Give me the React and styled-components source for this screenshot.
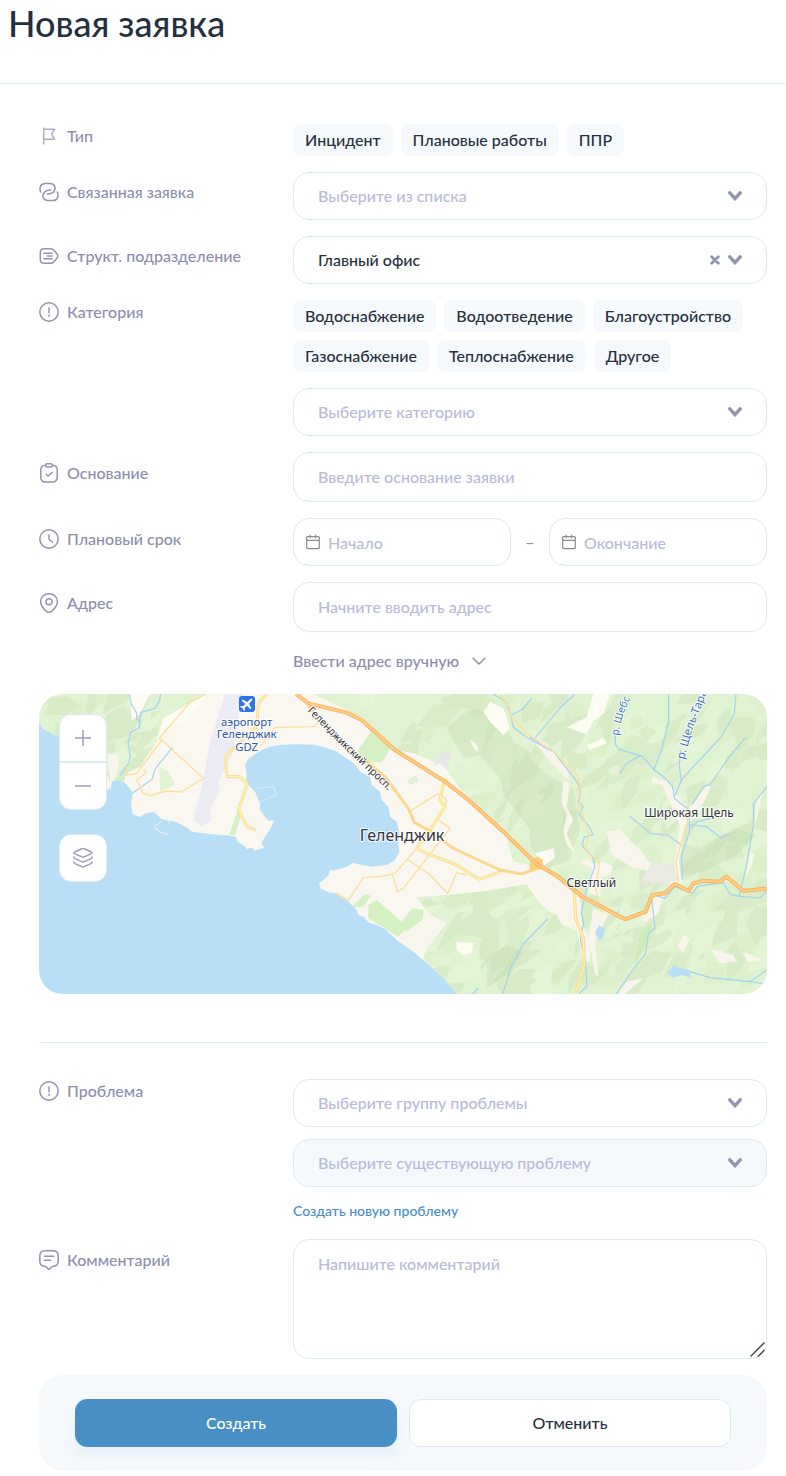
import React, { useState } from 'react'
import styled, { createGlobalStyle } from 'styled-components'

const colors = {
  text: '#252f3d',
  label: '#8e8dad',
  placeholder: '#b9b9d9',
  border: '#dcebef',
  pale: '#f5f9fc',
  primary: '#478fc5'
}

const requestTypes = ['Инцидент', 'Плановые работы', 'ППР']
const categories = [
  'Водоснабжение',
  'Водоотведение',
  'Благоустройство',
  'Газоснабжение',
  'Теплоснабжение',
  'Другое'
]

// 20x20 outline icons for the label column
const icons = {
  flag: (
    <g opacity='0.75'>
      <path d='M4.7 2v16' />
      <path d='M4.7 3.3h11l-2.6 4.2c-.3.6-.3 1.2 0 1.7l2.6 4.1h-11' />
    </g>
  ),
  link: (
    <>
      <path d='M1.7 10C.2 7 1 1.4 6 1.4h5c4.4 0 6 4 4.4 7.2C14.3 10.8 12 12 8.3 12' />
      <path
        d='M1.7 10C.2 7 1 1.4 6 1.4h5c4.4 0 6 4 4.4 7.2C14.3 10.8 12 12 8.3 12'
        transform='rotate(180 10 10)'
      />
    </>
  ),
  department: (
    <>
      <path d='M5.2 2.7h6.3c1.5 0 2.6.5 3.5 1.6l2.9 3.5c1 1.3 1 3.1 0 4.4L15 15.7c-.9 1.1-2 1.6-3.5 1.6H5.2C2.7 17.3 1.3 16 1.3 13.5v-7C1.3 4 2.7 2.7 5.2 2.7z' />
      <path d='M5 7.3h8M8.3 10H13M5 12.8h8' />
    </>
  ),
  alert: (
    <>
      <circle cx='10' cy='10' r='9.2' />
      <path d='M10 6v4.8M10 13.2v1' />
    </>
  ),
  clipboard: (
    <>
      <path d='M6.6 2.3C3.4 2.4 1.8 3.4 1.8 7v7c0 3.6 1.4 5 4.8 5h6.8c3.4 0 4.8-1.4 4.8-5V7c0-3.6-1.6-4.6-4.8-4.7' />
      <rect x='6.6' y='0.7' width='6.8' height='3.3' rx='1.6' />
      <path d='M7.3 11.3L9 13l4-3.4' />
    </>
  ),
  clock: (
    <>
      <circle cx='10' cy='10' r='9.2' />
      <path d='M10 6v3.2c0 1 .4 1.6 1.2 2.2l2.3 1.6' />
    </>
  ),
  pin: (
    <>
      <path d='M10 .8C5 .8 1.6 4 1.6 8.6c0 4.2 3 7.7 6.2 10 1.4 1 3 1 4.4 0 3.2-2.3 6.2-5.8 6.2-10C18.4 4 15 .8 10 .8z' />
      <circle cx='10' cy='8.7' r='3' />
    </>
  ),
  comment: (
    <>
      <path d='M6 .8h8c3.5 0 5.2 1.7 5.2 5.2v5c0 3.6-1.5 5-4.4 5.2-1.2.1-2 .3-2.8 1.2l-1.2 1.5c-.5.6-1.1.6-1.6 0L8 17.4c-.8-.9-1.6-1.1-2.8-1.2C2.3 16 .8 14.6.8 11V6C.8 2.5 2.5.8 6 .8z' />
      <path d='M5.3 6.3h9.4M5.3 10.3h6.2' />
    </>
  )
}

const Icon = ({ name }) => (
  <LabelIcon viewBox='0 0 20 20' aria-hidden='true'>
    {icons[name]}
  </LabelIcon>
)

const Chevron = () => (
  <svg width='14' height='10' viewBox='0 0 14 10' fill='none' aria-hidden='true'>
    <path
      d='M1.8 1.8L7 7.6l5.2-5.8'
      stroke='#9394b1'
      strokeWidth='3.4'
      strokeLinecap='round'
    />
  </svg>
)

const Calendar = () => (
  <svg
    width='14'
    height='16'
    viewBox='0 0 14 16'
    fill='none'
    stroke='#8c8c8c'
    strokeWidth='1.2'
    aria-hidden='true'
  >
    <rect x='0.7' y='2.6' width='12.6' height='12' rx='1' />
    <path d='M.7 6.4h12.6M4.2.8v3.4M9.6.8v3.4' />
  </svg>
)

const SelectField = ({ id, label, options, value, clearable, disabled }) => {
  const [selected, setSelected] = useState(value || '')
  return (
    <Control>
      <Select
        id={id}
        aria-label={label}
        value={selected}
        $empty={!selected}
        disabled={disabled}
        onChange={e => setSelected(e.target.value)}
      >
        {options.map((option, index) => (
          <option key={option} value={index === 0 && !value ? '' : option}>
            {option}
          </option>
        ))}
      </Select>
      <Indicators>
        {clearable && (
          <ClearButton
            type='button'
            aria-label='Очистить'
            onClick={() => setSelected('')}
          >
            <svg width='10' height='10' viewBox='0 0 10 10'>
              <path
                d='M1.7 1.7l6.6 6.6M8.3 1.7L1.7 8.3'
                stroke='#9394b1'
                strokeWidth='2.8'
                strokeLinecap='round'
              />
            </svg>
          </ClearButton>
        )}
        <Chevron />
      </Indicators>
    </Control>
  )
}

const Chips = ({ items, labelledBy }) => (
  <ChipList role='group' aria-labelledby={labelledBy}>
    {items.map(item => (
      <Chip type='button' key={item}>
        {item}
      </Chip>
    ))}
  </ChipList>
)

// Shaded facets of the mountain relief, seeded so that they never move
const makeFacets = count => {
  let seed = 17
  const rand = () => {
    seed = (seed * 16807) % 2147483647
    return seed / 2147483647
  }
  const fills = ['#c3dcae', '#cde3ba', '#eff9e2', '#d5edc2', '#e9f7dc', '#c9dbb9']
  return Array.from({ length: count }, (_, index) => {
    const x = 27 + rand() * 2184
    const y = 27 + rand() * 900
    const length = 25 + rand() * 60
    const width = 12 + rand() * 28
    const angle = -0.4 - rand() * 0.9
    const cos = Math.cos(angle)
    const sin = Math.sin(angle)
    const corners = [
      [-length, width * (rand() - 0.5)],
      [-length * 0.2 * rand(), -width],
      [length * 0.6, -width * rand()],
      [length, width * (rand() - 0.3)],
      [length * 0.1, width]
    ]
    return {
      key: index,
      fill: fills[Math.floor(rand() * fills.length)],
      points: corners
        .map(([a, b]) => `${Math.round(x + a * cos - b * sin)},${Math.round(y + a * sin + b * cos)}`)
        .join(' ')
    }
  })
}

const facets = makeFacets(560)

const MapDrawing = () => (
  <MapSvg
    viewBox='27 27 2184 900'
    preserveAspectRatio='xMidYMid slice'
    role='img'
    aria-label='Карта'
  >
    <defs>
      <clipPath id='hills'>
        <path d='M27 27H530L480 60 388 158 330 245 290 265 282 290 262 285 240 290 215 230 88 158 40 130 27 112z' />
        <path d='M850 27H2211V927H1282L1235 875 1180 820 1190 790 1250 715 1200 690 1160 637 1250 630 1370 618 1490 597 1525 650 1560 680 1630 710 1650 650 1570 570 1530 545 1450 530 1425 440 1290 310 1240 240 1150 205 1065 190 1070 165 1000 100 950 75z' />
      </clipPath>
      <path id='avenue' d='M832 78L930 178 1090 332' />
      <path id='shebs' d='M1766 152Q1770 90 1815 15' />
      <path id='tara' d='M1962 224L1985 140 2035 10' />
    </defs>

    <rect x='27' y='27' width='2184' height='900' fill='#faf7f0' />

    <g clipPath='url(#hills)'>
      <rect x='27' y='27' width='2184' height='900' fill='#dff2d2' />
      <g opacity='0.32'>
        {facets.map(facet => (
          <polygon key={facet.key} points={facet.points} fill={facet.fill} />
        ))}
      </g>
      <g fill='#b4cda1' opacity='0.25'>
        <path d='M1250 130l70-60 90 20 40 80 50 30-20 90-70-10-60-70-50 10z' />
        <path d='M1500 330l70-40 60 20 20 130-40 90-60 20-50-70z' />
        <path d='M1400 220l80-20 60 60 80 50 20 100-20 120-50-10-80-100-70-90z' />
        <path d='M1940 470l70 20 100-60 70 20-60 60-100 50-70 10z' />
        <path d='M1370 820l60-40 50 20-40 60-70 50z' />
      </g>
    </g>

    {/* bare slopes and valleys */}
    <g fill='#fdfcf3'>
      <path d='M300 27h60l-30 60-25 20z' />
      <path d='M400 100l70-40 60-33-60 80-60 20-30 40z' />
      <path d='M1360 80l20-30 40 20 20 60-20 20-40-40z' />
      <path d='M1690 27h50l-20 60-30 20-20 40-60-20 60-30z' />
      <path d='M1670 180l50-20 10 15-50 20z' />
      <path d='M1280 770l50 5-5 30-25 5-20-15z' />
      <path d='M1318 162l20 15 8 25-12-10z' />
      <path d='M1515 505l55-15 4 30-30 20z' />
    </g>
    <g fill='#f8f5ec'>
      <path d='M232 205l35 5-5 60-20 30z' />
      <path d='M1730 440l40-5 60 60 30 40 40 0 45 25-5 35-105-5 15-35-40-5-65-40z' />
      <path d='M1500 590l80-25 70 75 5 70 25 60 0 60-20-5-20-90-45-15-30-60z' />
      <path d='M1650 530l25-10 10 15 40-5 25 15-10 25-25 5-5 60-35-10 10-75z' />
      <path d='M1690 670l45 20-40 75 10 110-10-10-20-110z' />
      <path d='M1600 285l20 10-10 70 20 40-20 40 25 60-25-25-10-40 10-50-15-40z' />
      <path d='M1500 150l50 25 60 75 10 40-40-40-60-70z' />
      <path d='M1867 275l45 15 50 65 10 20 60-75 10 5-40 90-50 35-25-60-30-70-30-5z' />
      <path d='M1952 400l20 0-25 130 10 60-20 10-5-50z' />
      <path d='M1867 640l35-10-20 60-40 20-10-20z' />
      <path d='M2040 790l70 20 10 20-50 5z' />
      <path d='M2140 800l60 25-50 5z' />
      <path d='M1960 750l20 10-20 45-18-20z' />
      <path d='M2180 340l20-25-20 90-8 20z' />
      <path d='M2160 500l15 10-10 30-18 40z' />
      <path d='M1790 890l50-10-55 47-20 0z' />
      <path d='M1110 760l80-80 50 35-60 85z' />
    </g>
    <path d='M1840 570l30-40 60 10 15 45-50 10-60 5z' fill='#e6e6e0' opacity='0.8' />
    <path d='M1210 240l30-45 25 10-15 50-20-20z' fill='#e6e6e4' />

    {/* parks */}
    <g fill='#d5f0c3'>
      <path d='M985 195l40-58 60 50-30 45-60 0z' />
      <path d='M388 245l28 15 20 40-45 20z' fill='#e0f3d2' />
      <path d='M965 665l40-38 18 5-25 35z' />
      <path d='M1015 660l25-15 80 70 5 20-20 20-90-55z' />
      <path d='M1112 715l35-45 35 5-5 30-50 35z' />
      <path d='M598 448l25-70 12 5-20 68z' />
      <path d='M1812 840l20-100 35-25-20 70z' fill='#cdeab8' />
      <path d='M1130 285l30-15 5 20-25 10z' fill='#dff2d2' />
    </g>

    {/* runway */}
    <path
      d='M584 27h58l-16 30-3 80-18 75-40 80 3 28-27 50 3 35-28 20-26-22 25-95 25-135z'
      fill='#ecebf4'
    />

    {/* sea */}
    <path
      d='M27 112L40 132 60 142 88 158 150 220 232 314 242 308 246 290 262 285 283 292 303 314 308 325 303 360 308 388 328 396 350 385 372 380 395 402 440 412 475 430 485 440 540 447 600 452 618 455 622 470 640 480 650 492 665 488 675 497 703 488 694 475 708 450 722 430 733 406 715 408 705 395 690 375 690 355 675 320 660 305 648 285 650 265 645 240 655 222 675 208 695 195 720 185 750 180 800 178 850 179 880 186 915 197 950 220 975 238 990 260 1020 275 1025 300 1050 320 1055 345 1075 365 1080 395 1100 410 1108 440 1105 480 1108 500 1095 525 1070 540 1025 545 985 538 970 533 950 545 915 556 900 555 895 572 868 595 870 610 895 622 915 625 955 650 980 675 985 690 1000 695 1015 712 1040 720 1065 732 1100 765 1150 800 1200 842 1240 880 1281 927H27z'
      fill='#b8dff5'
    />
    <g fill='none' stroke='#f5f3ec' strokeWidth='3'>
      <path d='M373 428l20 14 23 7M376 424l20-16M418 404v15' />
      <path d='M680 310l50-6 8 26-48 22' strokeWidth='2' />
    </g>

    {/* rivers */}
    <g fill='none' stroke='#a2d2ef' strokeWidth='3.5' strokeLinejoin='round'>
      <path d='M298 27l6 30 15 25 2 22 9 3-3 22-25 14-8 30 7 40-5 22-12 15-13 22' />
      <path d='M392 27l-3 20-15 23-42 12-4 45' />
      <path d='M428 187l-53 65-8 30-60 43' />
      <path d='M1390 27l40 25 12 40 8 35 40 30 40 22M1505 40l-30 35-32 15M1635 27l-45 42-75 90' />
      <path d='M1500 155l40 30 30 15 60 75 20 30 0 30-7 15 16 14-12 25 30 35 12 24-27 10-5 25 30 30 8 30-22 60-20 80 8 30-10 50 15 65 5 75-30 30' />
      <path d='M1756 150l0 28 12 15 70 22 35 40 33 25 22 25 5 35 25 20 20 15 0 65-23 70 2 75M1768 267l20-30 45-27' />
      <path d='M1916 27l0 80-20 85-26 65M2118 27l-5 60-40 70-80 85-40 45-18 45M1951 195l-3 50 7 45M2147 157l-50 60-58 83-17 3-35 55' />
      <path d='M1798 393l65 53 50 4 42 31M1980 420l50 5 42 33 26-10M1982 430l20-20 40-10' />
      <path d='M2211 305l-40 50 0 60-22 130-22 90' />
      <path d='M1860 625l45 15 30-35 50 20 20-22 75-10 20 35 30 6 60 5 20-20' />
      <path d='M1865 640l10 90-20 15-8 60-50 65-38 57' />
      <path d='M1980 860l60 18 120 12 50-35M2150 888l50 8' />
      <path d='M1418 927l27-85 35-65 73-75M1328 927l17-18' />
    </g>
    <path d='M1910 860l15-8 5-14 15 10 35 8 2 22-25-8-30 8-12-12z' fill='#b8dff5' />
    <path d='M1695 745l12-25 17 12-5 25-10 12z' fill='#b8dff5' />

    {/* streets */}
    <g fill='none' stroke='#fcdf9b' strokeWidth='4' strokeLinejoin='round'>
      <path d='M528 27l-48 25-92 108 7 5-75 100-28 5-2-26M395 165l125 115-67 41-43-3-50 14-20-7-20-40 30-23-10-10' />
      <path d='M690 185l45-57 115-3 20-15' />
      <path d='M915 622l40 25 45-70 50-2 45-10 65-75' />
      <path d='M1088 568l14 52 18-10 105-135 35-45-35-25M1130 522l65 43 58 60 27-62 30 7' />
      <path d='M1138 380l87-55 25 20-5 20' />
      <path d='M1410 27l28 40 5 30 50 50 75 50 75 75 10 45-5 45 30 90-15 40 45 40-10 80 15 70' />
      <path d='M1960 370l15 30-15 50-22 80 7 60' />
    </g>
    <g fill='none' stroke='#f9d98a' strokeWidth='9' strokeLinejoin='round'>
      <path d='M710 27l-25 28-5 70-95 90 7 60h38l22 23-27 77 27 50 26 10' />
      <path d='M1160 490l30 15 90 35 67 43 68-23M1160 490l40-55 45-70-15-20 10-45 10-20' />
      <path d='M1633 620l4 80 23 60 3 80-28 87' />
    </g>
    <g fill='none' stroke='#fff3b5' strokeWidth='4' strokeLinejoin='round'>
      <path d='M710 27l-25 28-5 70-95 90 7 60h38l22 23-27 77 27 50 26 10' />
      <path d='M1160 490l30 15 90 35 67 43 68-23M1160 490l40-55 45-70-15-20 10-45 10-20' />
      <path d='M1633 620l4 80 23 60 3 80-28 87' />
    </g>
    <path
      d='M835 62l90 105 85 63 55 45 70 95 18 42 47 26 70 52 140 65 65 12 55-20'
      fill='none'
      stroke='#fdd68f'
      strokeWidth='9'
      strokeLinejoin='round'
    />
    <path d='M1500 530l20-15 18 8v30l-40 2z' fill='#fdcf7e' />
    {[
      ['#f9b45f', 12],
      ['#ffcd85', 6]
    ].map(([stroke, width]) => (
      <path
        key={stroke}
        d='M798 27l37 28 115 28 45 22 100 90 150 95 65 50 110 100 100 97 60 35 80 65 125 66 62-23 20-50 38-5 30-28 40 21 15-23 30-8 50 3 20-15 50 43 75-8'
        fill='none'
        stroke={stroke}
        strokeWidth={width}
        strokeLinejoin='round'
      />
    ))}

    {/* names */}
    <MapText $size={34} $fill='#2a56a6' textAnchor='middle'>
      <tspan x='650' y='122'>аэропорт</tspan>
      <tspan x='650' y='160'>Геленджик</tspan>
      <tspan x='650' y='199'>GDZ</tspan>
    </MapText>
    <rect x='627' y='33' width='48' height='48' rx='9' fill='#2f74e6' />
    <path
      d='M664 41c3 0 4 2 2 5l-9 10 7 14-3 3-10-11-7 7 1 7-3 2-4-8-8-4 2-3 7 1 7-7-11-10 3-3 14 7 9-9z'
      fill='#fff'
    />
    <MapText $size={48} x='1116' y='468' textAnchor='middle'>Геленджик</MapText>
    <MapText $size={36} x='1977' y='396' textAnchor='middle'>Широкая Щель</MapText>
    <MapText $size={36} x='1684' y='607' textAnchor='middle'>Светлый</MapText>
    <MapText $size={31}>
      <textPath href='#avenue'>Геленджикский просп.</textPath>
    </MapText>
    <MapText $size={31} $fill='#3f78bd'>
      <textPath href='#shebs'>р. Шебс</textPath>
    </MapText>
    <MapText $size={34} $fill='#3f78bd'>
      <textPath href='#tara'>р. Щель-Тара</textPath>
    </MapText>
  </MapSvg>
)

const App = () => {
  return (
    <>
      <GlobalStyle />
      <Header>
        <Title>Новая заявка</Title>
      </Header>
      <Form onSubmit={e => e.preventDefault()}>
        <Row>
          <Label as='span' id='type-label'>
            <Icon name='flag' />
            Тип
          </Label>
          <Chips items={requestTypes} labelledBy='type-label' />
        </Row>
        <Row>
          <Label htmlFor='related' $offset={8}>
            <Icon name='link' />
            Связанная заявка
          </Label>
          <SelectField id='related' options={['Выберите из списка']} />
        </Row>
        <Row>
          <Label htmlFor='department' $offset={8}>
            <Icon name='department' />
            Структ. подразделение
          </Label>
          <SelectField
            id='department'
            options={['Главный офис']}
            value='Главный офис'
            clearable
          />
        </Row>
        <Row>
          <Label htmlFor='category' id='category-label'>
            <Icon name='alert' />
            Категория
          </Label>
          <Stack $gap={16}>
            <Chips items={categories} labelledBy='category-label' />
            <SelectField id='category' options={['Выберите категорию']} />
          </Stack>
        </Row>
        <Row>
          <Label htmlFor='reason' $offset={9}>
            <Icon name='clipboard' />
            Основание
          </Label>
          <Input id='reason' placeholder='Введите основание заявки' />
        </Row>
        <Row>
          <Label htmlFor='start' $offset={9}>
            <Icon name='clock' />
            Плановый срок
          </Label>
          <Period>
            <DateField>
              <Calendar />
              <DateInput id='start' placeholder='Начало' />
            </DateField>
            <Dash>–</Dash>
            <DateField>
              <Calendar />
              <DateInput aria-label='Окончание' placeholder='Окончание' />
            </DateField>
          </Period>
        </Row>
        <Row>
          <Label htmlFor='address' $offset={9}>
            <Icon name='pin' />
            Адрес
          </Label>
          <Stack $gap={12}>
            <Input id='address' placeholder='Начните вводить адрес' />
            <ManualButton type='button'>
              Ввести адрес вручную
              <svg width='14' height='8' viewBox='0 0 14 8' fill='none'>
                <path d='M.7.7L7 7 13.3.7' stroke='#8e8dad' strokeWidth='1.4' />
              </svg>
            </ManualButton>
          </Stack>
        </Row>

        <MapFrame>
          <MapDrawing />
          <MapControls>
            <ZoomGroup>
              <MapButton type='button' aria-label='Приблизить'>
                <svg width='16' height='16' viewBox='0 0 16 16'>
                  <path d='M8 0v16M0 8h16' />
                </svg>
              </MapButton>
              <MapButton type='button' aria-label='Отдалить'>
                <svg width='16' height='16' viewBox='0 0 16 16'>
                  <path d='M0 8h16' />
                </svg>
              </MapButton>
            </ZoomGroup>
            <MapButton type='button' aria-label='Слои' $single>
              <svg width='20' height='20' viewBox='0 0 20 20'>
                <path d='M8.8.8L2 3.8c-1.4.7-1.4 1.4 0 2.1l6.8 3c.8.4 1.6.4 2.4 0l6.8-3c1.4-.7 1.4-1.4 0-2.1l-6.8-3c-.8-.4-1.6-.4-2.4 0z' />
                <path d='M.8 9c0 .8.4 1.2 1.2 1.6l6.8 3c.8.4 1.6.4 2.4 0l6.8-3c.8-.4 1.2-.8 1.2-1.6' />
                <path d='M.8 14c0 .8.4 1.2 1.2 1.6l6.8 3c.8.4 1.6.4 2.4 0l6.8-3c.8-.4 1.2-.8 1.2-1.6' />
              </svg>
            </MapButton>
          </MapControls>
        </MapFrame>

        <Divider />

        <Row>
          <Label htmlFor='problem-group'>
            <Icon name='alert' />
            Проблема
          </Label>
          <Stack $gap={12}>
            <SelectField id='problem-group' options={['Выберите группу проблемы']} />
            <SelectField
              id='problem'
              label='Существующая проблема'
              options={['Выберите существующую проблему']}
              disabled
            />
            <NewProblem href='#problem'>Создать новую проблему</NewProblem>
          </Stack>
        </Row>
        <Row>
          <Label htmlFor='comment' $offset={9}>
            <Icon name='comment' />
            Комментарий
          </Label>
          <Control>
            <Textarea id='comment' placeholder='Напишите комментарий' />
            <ResizeGrip width='15' height='15' viewBox='0 0 15 15' aria-hidden='true'>
              <path d='M.5 14.5l14-14M8 14.5L14.5 8' />
            </ResizeGrip>
          </Control>
        </Row>
        <Footer>
          <FooterButton type='submit' $primary>
            Создать
          </FooterButton>
          <FooterButton type='button'>Отменить</FooterButton>
        </Footer>
      </Form>
    </>
  )
}

const GlobalStyle = createGlobalStyle`
  * {
    box-sizing: border-box;
  }
  body {
    margin: 0;
    background: white;
    color: ${colors.text};
    font: 500 16px/24px Lato, 'Open Sans', sans-serif;
  }
  button, input, select, textarea {
    font: inherit;
    color: inherit;
  }
`
const Header = styled.header`
  padding: 0 8px 37px;
  border-bottom: 1px solid ${colors.border};
`
const Title = styled.h1`
  margin: 0;
  font-size: 36px;
  font-weight: 500;
  line-height: 46px;
`
const Form = styled.form`
  display: flex;
  flex-direction: column;
  gap: 16px;
  padding: 40px 19px 5px 39px;
`
const Row = styled.div`
  display: grid;
  grid-template-columns: 254px minmax(0, 1fr);
  align-items: start;
`
const Label = styled.label`
  display: flex;
  align-items: center;
  gap: 8px;
  padding-top: ${props => props.$offset || 0}px;
  color: ${colors.label};
`
const LabelIcon = styled.svg`
  width: 20px;
  height: 20px;
  fill: none;
  stroke: #9493b3;
  stroke-width: 1.5;
  stroke-linecap: round;
  stroke-linejoin: round;
`
const Stack = styled.div`
  display: flex;
  flex-direction: column;
  align-items: stretch;
  gap: ${props => props.$gap}px;
`
const ChipList = styled.div`
  display: flex;
  flex-wrap: wrap;
  gap: 8px;
`
const Chip = styled.button`
  height: 32px;
  padding: 0 12px;
  border: none;
  border-radius: 8px;
  background: ${colors.pale};
  cursor: pointer;
`
const Control = styled.div`
  position: relative;
`
const Select = styled.select`
  display: block;
  width: 100%;
  height: 48px;
  padding: 0 64px 0 24px;
  border: 1px solid ${colors.border};
  border-radius: 16px;
  background: white;
  color: ${props => (props.$empty ? colors.placeholder : colors.text)};
  appearance: none;
  &:disabled {
    background: ${colors.pale};
    opacity: 1;
  }
`
const Indicators = styled.div`
  position: absolute;
  top: 0;
  right: 25px;
  display: flex;
  align-items: center;
  gap: 8px;
  height: 48px;
  pointer-events: none;
`
const ClearButton = styled.button`
  display: flex;
  padding: 0;
  border: none;
  background: none;
  pointer-events: auto;
`
const Input = styled.input`
  width: 100%;
  height: 50px;
  padding: 0 24px 2px;
  border: 1px solid ${colors.border};
  border-radius: 16px;
  background: white;
  &::placeholder {
    color: ${colors.placeholder};
  }
`
const Period = styled.div`
  display: grid;
  grid-template-columns: minmax(0, 1fr) 38px minmax(0, 1fr);
  align-items: center;
`
const DateField = styled.div`
  display: flex;
  align-items: center;
  gap: 8px;
  height: 48px;
  padding: 0 12px;
  border: 1px solid ${colors.border};
  border-radius: 16px;
`
const DateInput = styled.input`
  flex: 1;
  min-width: 0;
  padding: 2px 0 0;
  border: none;
  background: none;
  &::placeholder {
    color: ${colors.placeholder};
  }
`
const Dash = styled.span`
  color: ${colors.label};
  text-align: center;
`
const ManualButton = styled.button`
  display: flex;
  align-items: center;
  align-self: flex-start;
  gap: 13px;
  height: 34px;
  padding: 0;
  border: none;
  background: none;
  color: ${colors.label};
`
const MapFrame = styled.div`
  position: relative;
  height: 300px;
  border-radius: 24px;
  overflow: hidden;
`
const MapSvg = styled.svg`
  display: block;
  width: 100%;
  height: 100%;
`
const MapText = styled.text`
  font: 400 ${props => props.$size}px 'Noto Sans', sans-serif;
  fill: ${props => props.$fill || '#33363d'};
  stroke: rgba(255, 255, 255, 0.85);
  stroke-width: 6;
  stroke-linejoin: round;
  paint-order: stroke;
`
const MapControls = styled.div`
  position: absolute;
  top: 20px;
  left: 20px;
  display: flex;
  flex-direction: column;
  gap: 24px;
`
const ZoomGroup = styled.div`
  display: flex;
  flex-direction: column;
`
const MapButton = styled.button`
  display: flex;
  align-items: center;
  justify-content: center;
  width: 48px;
  height: 48px;
  padding: 0;
  border: 1px solid ${colors.border};
  border-radius: ${props => (props.$single ? '12px' : '0')};
  background: white;
  ${ZoomGroup} &:first-child {
    border-radius: 12px 12px 0 0;
  }
  ${ZoomGroup} &:last-child {
    border-radius: 0 0 12px 12px;
  }
  svg {
    fill: none;
    stroke: #9f9eba;
    stroke-width: 1.5;
    stroke-linecap: round;
  }
`
const Divider = styled.hr`
  width: 100%;
  margin: 32px 0 20px;
  border: none;
  border-top: 1px solid ${colors.border};
`
const NewProblem = styled.a`
  align-self: flex-start;
  color: ${colors.primary};
  font-size: 14px;
  text-decoration: none;
`
const Textarea = styled.textarea`
  display: block;
  width: 100%;
  height: 120px;
  padding: 12px 24px;
  border: 1px solid ${colors.border};
  border-radius: 16px;
  background: white;
  resize: vertical;
  &::placeholder {
    color: ${colors.placeholder};
  }
  &::-webkit-resizer {
    background: transparent;
  }
`
const ResizeGrip = styled.svg`
  position: absolute;
  right: 2px;
  bottom: 2px;
  fill: none;
  stroke: #4d4d4d;
  stroke-width: 1.5;
  pointer-events: none;
`
const Footer = styled.footer`
  display: flex;
  gap: 12px;
  padding: 24px 36px;
  border-radius: 24px;
  background: ${colors.pale};
`
const FooterButton = styled.button`
  flex: 1;
  height: 48px;
  border: 1px solid ${props => (props.$primary ? colors.primary : colors.border)};
  border-radius: 12px;
  background: ${props => (props.$primary ? colors.primary : 'white')};
  color: ${props => (props.$primary ? 'white' : colors.text)};
  box-shadow: ${props =>
    props.$primary ? '0 8px 16px rgba(71, 111, 197, 0.08)' : 'none'};
  cursor: pointer;
`

export default App
